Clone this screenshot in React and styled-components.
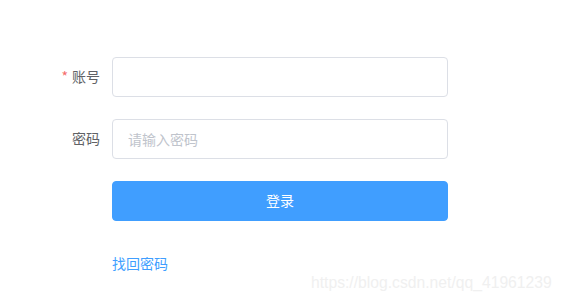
import React from "react";
import styled, { createGlobalStyle } from "styled-components";

const Global = createGlobalStyle`
  html, body {
    margin: 0;
    padding: 0;
    background: #fff;
  }
  body {
    font-family: "Microsoft YaHei", "Noto Sans CJK SC", "Noto Sans", sans-serif;
    width: 563px;
    height: 303px;
    overflow: hidden;
    position: relative;
  }
`;

const Form = styled.form`
  width: 436px;
  padding: 57px 0 0 12px;
`;

const Item = styled.div`
  display: flex;
  margin-bottom: 22px;
`;

const Label = styled.label`
  width: 100px;
  height: 40px;
  box-sizing: border-box;
  padding-right: 12px;
  text-align: right;
  font-size: 14px;
  line-height: 38px;
  color: #606266;
`;

const Star = styled.span`
  color: #f56c6c;
  margin-right: 4px;
`;

const Content = styled.div`
  flex: 1;
  line-height: 38px;
`;

const Input = styled.input`
  display: block;
  width: 100%;
  height: 40px;
  box-sizing: border-box;
  padding: 0 15px 1px;
  border: 1px solid #dcdfe6;
  border-radius: 4px;
  font-size: 14px;
  font-family: inherit;
  color: #606266;
  outline: none;

  &::placeholder {
    color: #c0c4cc;
  }
`;

const Button = styled.button`
  display: block;
  width: 100%;
  height: 40px;
  padding: 0 0 2px;
  border: 1px solid #409eff;
  border-radius: 4px;
  background: #409eff;
  color: #fff;
  font-size: 14px;
  font-family: inherit;
  cursor: pointer;
`;

const Link = styled.a`
  font-size: 14px;
  color: #409eff;
  text-decoration: none;
`;

const Watermark = styled.div`
  position: absolute;
  left: 311px;
  top: 274px;
  font-family: "Liberation Sans", Arial, sans-serif;
  font-size: 15.7px;
  color: #f0f0f0;
  white-space: nowrap;
`;

export default function App() {
  return (
    <>
      <Global />
      <Form onSubmit={e => e.preventDefault()}>
        <Item>
          <Label>
            <Star>*</Star>账号
          </Label>
          <Content>
            <Input type="text" />
          </Content>
        </Item>
        <Item>
          <Label>密码</Label>
          <Content>
            <Input type="password" placeholder="请输入密码" />
          </Content>
        </Item>
        <Item>
          <Label />
          <Content>
            <Button type="submit">登录</Button>
          </Content>
        </Item>
        <Item>
          <Label />
          <Content>
            <Link href="#">找回密码</Link>
          </Content>
        </Item>
      </Form>
      <Watermark>https://blog.csdn.net/qq_41961239</Watermark>
    </>
  );
}
